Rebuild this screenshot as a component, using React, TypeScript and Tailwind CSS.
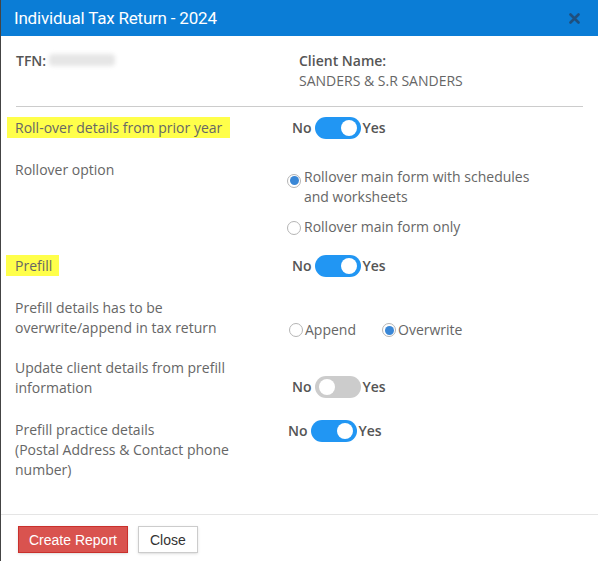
import React, { useState } from 'react';

const Toggle: React.FC<{ on: boolean; onChange: () => void }> = ({ on, onChange }) => (
  <div className="flex items-center font-['Open_Sans',sans-serif] text-[14px] font-semibold text-[#555]">
    <span className="mr-[3px]">No</span>
    <button
      onClick={onChange}
      className={`relative w-[46px] h-[22px] rounded-full ${on ? 'bg-[#2196f3]' : 'bg-[#cccccc]'}`}
    >
      <span
        className={`absolute top-[3px] w-[16px] h-[16px] rounded-full bg-white ${on ? 'left-[26px]' : 'left-[4px]'}`}
      />
    </button>
    <span className="ml-[2px]">Yes</span>
  </div>
);

const Radio: React.FC<{ checked: boolean }> = ({ checked }) => (
  <span className="inline-flex w-[14px] h-[14px] shrink-0 rounded-full border border-[#b5b5b5] bg-white items-center justify-center">
    {checked && <span className="w-[9px] h-[9px] rounded-full bg-[#3a87d6]" />}
  </span>
);

export default function App() {
  const [rollover, setRollover] = useState(true);
  const [prefill, setPrefill] = useState(true);
  const [updateClient, setUpdateClient] = useState(false);
  const [practice, setPractice] = useState(true);
  const [rollOpt, setRollOpt] = useState<'full' | 'main'>('full');
  const [mode, setMode] = useState<'append' | 'overwrite'>('overwrite');

  return (
    <div className="w-[598px] h-[561px] bg-white border-l border-[#444] flex flex-col overflow-hidden font-['Open_Sans',sans-serif] text-[14px] leading-[20px] text-[#666]">
      {/* header */}
      <div className="h-[36px] shrink-0 bg-[#0b7dd6] flex items-center justify-between pl-[13px] pr-[18px]">
        <h1 className="font-['Roboto',sans-serif] text-[17px] tracking-[-0.2px] text-white">Individual Tax Return - 2024</h1>
        <button className="text-[#1f4f7e]">
          <svg width="11" height="11" viewBox="0 0 11 11">
            <path d="M1.5 1.5 L9.5 9.5 M9.5 1.5 L1.5 9.5" stroke="currentColor" strokeWidth="2.6" strokeLinecap="round" />
          </svg>
        </button>
      </div>

      {/* body */}
      <div className="flex-1 flex flex-col">
        <div className="flex pt-[15px] pl-[15px]">
          <div className="w-[283px] font-semibold text-[#555] flex">
            TFN:
            <span className="ml-[3px] mt-[3px] w-[66px] h-[12px] rounded bg-[#e6e6e6] blur-[2px]" />
          </div>
          <div>
            <div className="font-semibold text-[#555]">Client Name:</div>
            <div>SANDERS &amp; S.R SANDERS</div>
          </div>
        </div>
        <div className="mx-[15px] mt-[15px] h-px bg-[#cccccc]" />

        <div className="flex items-center mt-[10px]">
          <div className="w-[291px] pl-[6px]">
            <span className="bg-[#ffff4a] pl-[8px] pr-[8px] py-px">Roll-over details from prior year</span>
          </div>
          <Toggle on={rollover} onChange={() => setRollover(!rollover)} />
        </div>

        <div className="flex mt-[21px]">
          <div className="w-[286px] pl-[14px]">Rollover option</div>
          <div className="flex flex-col pt-[7px]">
            <label className="flex items-start cursor-pointer" onClick={() => setRollOpt('full')}>
              <span className="mt-[3px]"><Radio checked={rollOpt === 'full'} /></span>
              <span className="ml-[3px]">Rollover main form with schedules<br />and worksheets</span>
            </label>
            <label className="flex items-start cursor-pointer mt-[10px]" onClick={() => setRollOpt('main')}>
              <span className="mt-[3px]"><Radio checked={rollOpt === 'main'} /></span>
              <span className="ml-[3px]">Rollover main form only</span>
            </label>
          </div>
        </div>

        <div className="flex items-center mt-[15px]">
          <div className="w-[291px] pl-[5px]">
            <span className="bg-[#ffff4a] pl-[9px] pr-[7px] py-px">Prefill</span>
          </div>
          <Toggle on={prefill} onChange={() => setPrefill(!prefill)} />
        </div>

        <div className="flex items-end mt-[21px]">
          <div className="w-[288px] pl-[14px]">Prefill details has to be<br />overwrite/append in tax return</div>
          <div className="flex items-center mb-[-2px]">
            <label className="flex items-center cursor-pointer" onClick={() => setMode('append')}>
              <Radio checked={mode === 'append'} />
              <span className="ml-[2px]">Append</span>
            </label>
            <label className="flex items-center cursor-pointer ml-[26px]" onClick={() => setMode('overwrite')}>
              <Radio checked={mode === 'overwrite'} />
              <span className="ml-[2px]">Overwrite</span>
            </label>
          </div>
        </div>

        <div className="flex items-end mt-[20px]">
          <div className="w-[291px] pl-[14px]">Update client details from prefill<br />information</div>
          <Toggle on={updateClient} onChange={() => setUpdateClient(!updateClient)} />
        </div>

        <div className="flex items-start mt-[22px]">
          <div className="w-[287px] pl-[14px]">Prefill practice details<br />(Postal Address &amp; Contact phone<br />number)</div>
          <Toggle on={practice} onChange={() => setPractice(!practice)} />
        </div>
      </div>

      {/* footer */}
      <div className="h-[47px] shrink-0 border-t border-[#e5e5e5] flex items-start pt-[11px] pl-[17px] gap-[10px] font-['Liberation_Sans',Arial,sans-serif] text-[14px]">
        <button className="h-[27px] px-[10px] bg-[#d9534f] border border-[#c9302c] text-white shadow-sm">Create Report</button>
        <button className="h-[27px] px-[11px] bg-white border border-[#cccccc] text-[#333] shadow-sm">Close</button>
      </div>
    </div>
  );
}
